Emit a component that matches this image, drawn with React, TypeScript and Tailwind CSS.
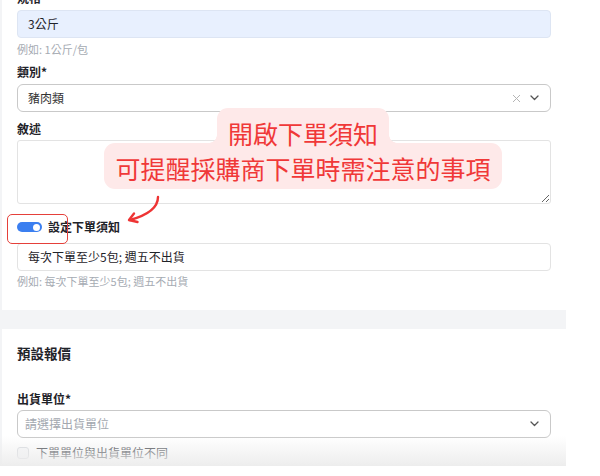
import React from "react";

const font = "font-['Noto_Sans_CJK_TC','Noto_Sans',sans-serif]";

function Chevron() {
  return (
    <svg width="9" height="6" viewBox="0 0 9 6" fill="none">
      <path d="M1 1l3.5 3.5L8 1" stroke="#555" strokeWidth="1.3" strokeLinecap="round" strokeLinejoin="round" />
    </svg>
  );
}

function Label({ children, className = "" }: { children: React.ReactNode; className?: string }) {
  return (
    <div className={`text-[12px] leading-[16px] font-bold text-[#1f2329] ${className}`}>{children}</div>
  );
}

function Helper({ children, className = "" }: { children: React.ReactNode; className?: string }) {
  return <div className={`text-[11px] leading-[14px] text-[#a6abb3] ${className}`}>{children}</div>;
}

export default function App() {
  return (
    <div className={`relative w-[600px] h-[476px] overflow-hidden bg-white ${font}`}>
      <div className="relative w-[566px] h-full bg-[#f3f4f6] pl-[2px]">
        {/* 基本資料 */}
        <section className="bg-white -mt-[10px] px-[15px] pb-[22px]">
          <Label className="mb-[4px]">規格</Label>
          <div className="h-[28px] rounded-[4px] border border-[#dde5f3] bg-[#e8f0fe] px-[10px] flex items-center text-[12px] text-[#1f2329]">
            3公斤
          </div>
          <Helper className="mt-[4px]">例如: 1公斤/包</Helper>

          <Label className="mt-[8px] mb-[4px]">類別*</Label>
          <div className="h-[28px] rounded-[6px] border border-[#c9c9c9] bg-white pl-[10px] pr-[11px] flex items-center text-[12px] text-[#333]">
            <span className="flex-1">豬肉類</span>
            <svg width="9" height="9" viewBox="0 0 9 9" fill="none" className="mr-[9px]">
              <path d="M1 1l7 7M8 1L1 8" stroke="#b5b5b5" strokeWidth="1" />
            </svg>
            <Chevron />
          </div>

          <Label className="mt-[9px] mb-[3px]">敘述</Label>
          <textarea className="block w-full h-[64px] rounded-[3px] border border-[#e3e3e3] bg-white outline-none" />

          <div className="mt-[15px] mb-[8px] h-[16px] flex items-center gap-[6px]">
            <div className="w-[25px] h-[10px] rounded-full bg-[#3b7ff0] flex items-center justify-end pr-[2px]">
              <div className="w-[7px] h-[7px] rounded-full bg-white" />
            </div>
            <span className="text-[12px] font-bold text-[#1f2329]">設定下單須知</span>
          </div>
          <div className="h-[28px] rounded-[4px] border border-[#e3e3e3] bg-white px-[10px] flex items-center text-[12px] text-[#1f2329]">
            每次下單至少5包; 週五不出貨
          </div>
          <Helper className="mt-[3px]">例如: 每次下單至少5包; 週五不出貨</Helper>
        </section>

        {/* 預設報價 */}
        <section className="mt-[19px] bg-white px-[15px] pt-[15px] pb-[40px]">
          <div className="text-[13.5px] leading-[18px] font-bold text-[#1f2329]">預設報價</div>
          <Label className="mt-[29px] mb-[3px]">出貨單位*</Label>
          <div className="h-[28px] rounded-[6px] border border-[#c9c9c9] bg-white pl-[7px] pr-[11px] flex items-center text-[12px] text-[#a3a8b0]">
            <span className="flex-1">請選擇出貨單位</span>
            <Chevron />
          </div>
          <div className="mt-[7px] h-[16px] flex items-center gap-[7px]">
            <div className="w-[12px] h-[12px] rounded-[3px] border border-[#d5d8dd] bg-[#f7f8fa]" />
            <span className="text-[12px] text-[#2a2e35]">下單單位與出貨單位不同</span>
          </div>
        </section>

        {/* bottom fade */}
        <div className="absolute left-0 right-0 bottom-0 h-[30px] bg-gradient-to-b from-white/0 to-[#ededed]" />
      </div>

      {/* annotation: highlight box */}
      <div className="absolute left-[7px] top-[214px] w-[61px] h-[30px] rounded-[5px] border border-[#e5403a]" />

      {/* annotation: arrow */}
      <svg className="absolute left-0 top-0" width="600" height="476" viewBox="0 0 600 476" fill="none">
        <path d="M158 197 C158 208 148 215 130 220" stroke="#ee3434" strokeWidth="2.4" strokeLinecap="round" />
        <path d="M134 213.5 L129 220 L137.5 222" stroke="#ee3434" strokeWidth="2.4" strokeLinecap="round" strokeLinejoin="round" />
      </svg>

      {/* annotation: callout */}
      <div className="absolute left-[104px] top-[108px] w-[398px] flex flex-col items-center text-[25px] text-[#f03838]">
        <div className="relative z-10 h-[37px] rounded-t-[11px] bg-[#fee9e9] px-[11px] pt-[13px] leading-[24px] whitespace-nowrap">
          開啟下單須知
          <div className="absolute -left-[8px] top-[27px] w-[8px] h-[8px] bg-[radial-gradient(circle_at_0_0,transparent_7.5px,#fee9e9_8px)]" />
          <div className="absolute -right-[8px] top-[27px] w-[8px] h-[8px] bg-[radial-gradient(circle_at_100%_0,transparent_7.5px,#fee9e9_8px)]" />
        </div>
        <div className="-mt-[2px] w-full rounded-[11px] bg-[#fee9e9] px-[11px] pt-[13px] pb-[9px] leading-[24px] text-center whitespace-nowrap">
          可提醒採購商下單時需注意的事項
        </div>
      </div>
    </div>
  );
}
